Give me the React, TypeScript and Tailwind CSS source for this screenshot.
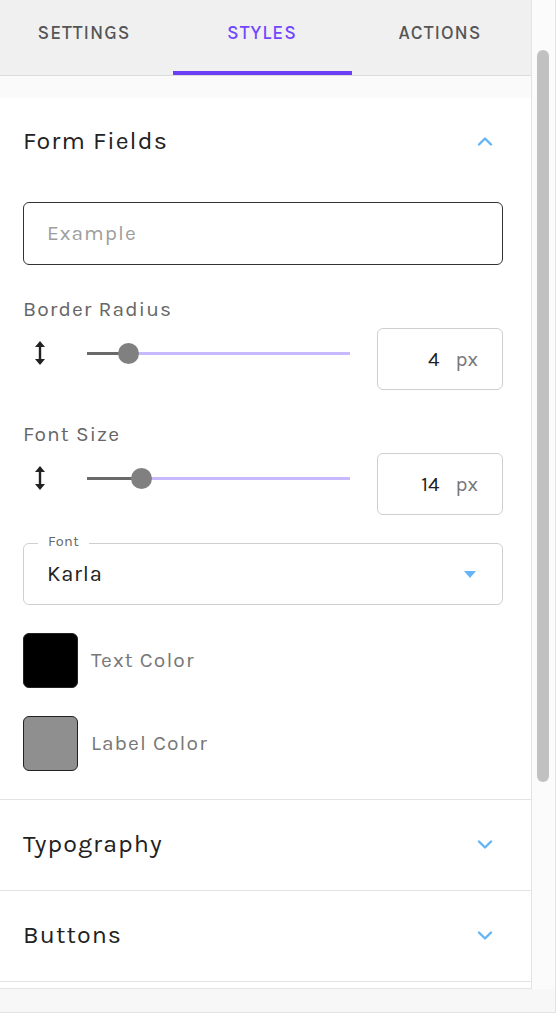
import React from "react";

const font = { fontFamily: "Karla, 'Open Sans', 'Noto Sans', sans-serif" };

function ChevronUp() {
  return (
    <svg width="16" height="10" viewBox="0 0 16 10" fill="none">
      <path d="M2 8.5 L8 2.5 L14 8.5" stroke="#64b5f6" strokeWidth="2.4" strokeLinecap="round" strokeLinejoin="round" />
    </svg>
  );
}
function ChevronDown() {
  return (
    <svg width="16" height="10" viewBox="0 0 16 10" fill="none">
      <path d="M2 1.5 L8 7.5 L14 1.5" stroke="#64b5f6" strokeWidth="2.4" strokeLinecap="round" strokeLinejoin="round" />
    </svg>
  );
}
function VArrow() {
  return (
    <svg width="12" height="26" viewBox="0 0 12 26">
      <path d="M6 1 L11 7 L7.2 7 L7.2 19 L11 19 L6 25 L1 19 L4.8 19 L4.8 7 L1 7 Z" fill="#222" />
    </svg>
  );
}

function SliderRow({ pct, value }: { pct: number; value: string }) {
  return (
    <div className="flex items-center h-[62px]">
      <div className="w-[64px] flex pl-[11px] mt-[-12px]">
        <VArrow />
      </div>
      <div className="relative w-[263px] h-[21px] flex items-center mt-[-12px]">
        <div className="absolute left-0 right-0 h-[3px] bg-[#c7b9fb]" />
        <div className="absolute left-0 h-[3px] bg-[#6a6a6a]" style={{ width: `${pct}px` }} />
        <div
          className="absolute w-[21px] h-[21px] rounded-full bg-[#808080]"
          style={{ left: `${pct - 10}px` }}
        />
      </div>
      <div className="ml-auto w-[126px] h-[62px] border border-[#cfcfcf] rounded-[6px] flex items-center justify-end pr-[24px] text-[20.5px]">
        <span className="text-[#222]">{value}</span>
        <span className="ml-[16px] text-[#777]">px</span>
      </div>
    </div>
  );
}

function CollapsedSection({ title }: { title: string }) {
  return (
    <div className="h-[91px] border-b border-[#e3e3e3] bg-white flex items-center justify-between pl-[23px] pr-[38px]">
      <span className="text-[25px] text-[#222] tracking-[1.1px] mt-[-3px]">{title}</span>
      <ChevronDown />
    </div>
  );
}

export default function App() {
  return (
    <div style={font} className="w-[556px] h-[1013px] bg-[#f7f7f7] border-r border-b border-[#e3e3e3] flex flex-col">
      <div className="flex h-[989px]">
        <div className="w-[532px] border-r border-[#e3e3e3] flex flex-col overflow-hidden">
          {/* Tabs */}
          <div className="h-[76px] bg-[#f0f0f0] border-b border-[#dcdcdc] flex">
            <div className="flex ml-[-5px]">
              {["SETTINGS", "STYLES", "ACTIONS"].map((t, i) => (
                <div key={t} className="w-[178px] relative flex justify-center pt-[20px]">
                  <span
                    className={`text-[19px] leading-[26px] font-medium tracking-[1px] ${i === 1 ? "text-[#7047ff]" : "text-[#555]"}`}
                  >
                    {t}
                  </span>
                  {i === 1 && <div className="absolute left-0 right-[-1px] bottom-0 h-[4px] bg-[#6b3ff5]" />}
                </div>
              ))}
            </div>
          </div>
          <div className="h-[22px] bg-[#fafafa]" />
          {/* Form Fields */}
          <div className="bg-white border-b border-[#e3e3e3] px-[23px] pb-[28px]">
            <div className="h-[86px] flex items-center justify-between pr-[15px]">
              <span className="text-[25px] text-[#222] tracking-[1.1px]">Form Fields</span>
              <ChevronUp />
            </div>
            <div className="mt-[18px] h-[63px] w-[480px] border-[1.5px] border-[#333] rounded-[6px] flex items-center pl-[23px] text-[21px] tracking-[1px] text-[#9e9e9e]">
              Example
            </div>
            <div className="mt-[31px] text-[21px] text-[#666] leading-[26px] tracking-[1.1px]">Border Radius</div>
            <div className="mt-[6px] w-[480px]">
              <SliderRow pct={41} value="4" />
            </div>
            <div className="mt-[31px] text-[21px] text-[#666] leading-[26px] tracking-[1.1px]">Font Size</div>
            <div className="mt-[6px] w-[480px]">
              <SliderRow pct={54} value="14" />
            </div>
            <div className="mt-[28px] relative w-[480px] h-[62px] border border-[#cfcfcf] rounded-[6px] flex items-center pl-[23px] pr-[26px] justify-between">
              <span className="absolute left-[14px] top-[-11px] bg-white px-[10px] text-[14.5px] leading-[18px] tracking-[0.5px] text-[#666]">Font</span>
              <span className="text-[22px] tracking-[0.8px] text-[#222]">Karla</span>
              <svg width="12" height="7" viewBox="0 0 12 7">
                <path d="M0 0 L12 0 L6 7 Z" fill="#64b5f6" />
              </svg>
            </div>
            <div className="mt-[28px] flex items-center">
              <div className="w-[55px] h-[55px] rounded-[6px] bg-black border border-[#222]" />
              <span className="ml-[13px] text-[21px] text-[#777] tracking-[1.1px]">Text Color</span>
            </div>
            <div className="mt-[28px] flex items-center">
              <div className="w-[55px] h-[55px] rounded-[6px] bg-[#8f8f8f] border-[1.5px] border-[#222]" />
              <span className="ml-[13px] text-[21px] text-[#777] tracking-[1.1px]">Label Color</span>
            </div>
          </div>
          <CollapsedSection title="Typography" />
          <CollapsedSection title="Buttons" />
          <div className="h-[7px] bg-white border-b border-[#e3e3e3]" />
        </div>
        <div className="flex-1 bg-[#fbfbfb] relative">
          <div className="absolute left-[5px] top-[50px] w-[12px] h-[732px] rounded-full bg-[#c1c1c1]" />
        </div>
      </div>
    </div>
  );
}
